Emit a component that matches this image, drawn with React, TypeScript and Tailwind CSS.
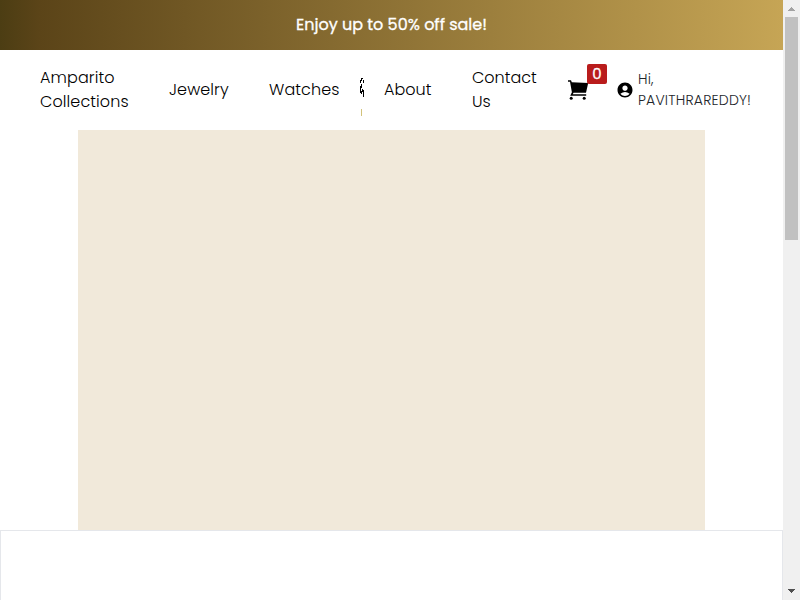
import React from "react";
import { MdAccountCircle } from "react-icons/md";

function NavLink({ children, className }: { children: React.ReactNode; className: string }) {
  return <a className={`shrink-0 whitespace-nowrap text-base leading-6 ${className}`}>{children}</a>;
}

function Logo() {
  return (
    <div className="mr-5 flex h-[52px] w-1 shrink-0 flex-col">
      <svg className="mt-[14px] h-[20px] w-[4px] shrink-0" viewBox="0 0 4 20" shapeRendering="crispEdges">
        <path d="M1 0h2v1H1zM0 2h1v3H0zM1 1h1v2H1zM3 2h1v3H3zM0 8h1v7H0zM1 6h1v4H1zM1 13h1v3H1zM2 11h1v3H2zM3 12h1v7H3z" />
      </svg>
      <div className="ml-[1px] mt-[11px] h-[7px] w-px shrink-0 bg-[#d2c27a]" />
    </div>
  );
}

function CartIcon() {
  return (
    <svg className="h-5 w-[22px]" viewBox="0 0 22 20">
      <path d="M-.3.3h3.3l.8 2L20.2 3 18 12.7H5.5l-.7 1.5h13.4v1.6H2.2l1.7-3.6L2 1.8H-.3z" fill="#000" />
      <circle cx="3.2" cy="18.3" r="1.5" />
      <circle cx="16.2" cy="18.3" r="1.5" />
    </svg>
  );
}

function Scrollbar() {
  return (
    <div className="flex h-[600px] w-[17px] shrink-0 flex-col bg-[#f0f0f0]">
      <div className="flex h-[17px] items-center justify-center">
        <svg width="7" height="4" shapeRendering="crispEdges" fill="#a3a3a3"><path d="M3 0h1v1h1v1h1v1h1v1H0V3h1V2h1V1h1z" /></svg>
      </div>
      <div className="ml-[2px] h-[223px] w-[13px] bg-[#c1c1c1]" />
      <div className="mt-auto flex h-[18px] items-center justify-center">
        <svg width="7" height="4" shapeRendering="crispEdges" fill="#505050"><path d="M0 0h7v1H6v1H5v1H4v1H3V3H2V2H1V1H0z" /></svg>
      </div>
    </div>
  );
}

export default function App() {
  return (
    <div className="flex h-[600px] w-[800px] overflow-hidden bg-white font-['Poppins','Inter',sans-serif] font-light text-black">
      <main className="flex w-[783px] shrink-0 flex-col">
        <div className="flex h-[50px] shrink-0 items-center justify-center bg-[linear-gradient(90deg,#4c3d13_0%,#5b4418_5%,#c6a555_100%)] font-normal text-white [-webkit-text-stroke:0.3px_white]">
          <span className="whitespace-nowrap">Enjoy up to 50% off sale!</span>
        </div>
        <nav className="flex h-20 shrink-0 items-center pl-10">
          <NavLink className="w-[129px] tracking-[0.1px]">Amparito<br />Collections</NavLink>
          <NavLink className="w-[100px] tracking-[0.1px]">Jewelry</NavLink>
          <NavLink className="w-[91px] tracking-[0.1px]">Watches</NavLink>
          <Logo />
          <NavLink className="w-[88px]">About</NavLink>
          <NavLink className="w-[95px]">Contact<br />Us</NavLink>
          <div className="relative ml-px h-5 w-[48px] shrink-0">
            <CartIcon />
            <span className="absolute -top-4 left-[19px] flex h-5 w-5 items-center justify-center rounded-[2px] bg-[#b91c1c] text-[15px] font-normal text-white [-webkit-text-stroke:0.3px_white]">0</span>
          </div>
          <MdAccountCircle className="mr-1 h-[18px] w-[18px] shrink-0" />
          <span className="whitespace-nowrap text-sm leading-[21px] tracking-[0.2px] text-[#212529]">Hi,<br />PAVITHRAREDDY!</span>
        </nav>
        <div className="ml-[78px] h-[400px] w-[627px] shrink-0 bg-[#f1e9da]" />
        <section className="h-[70px] shrink-0 border border-b-0 border-[#e5e7eb]" />
      </main>
      <Scrollbar />
    </div>
  );
}
